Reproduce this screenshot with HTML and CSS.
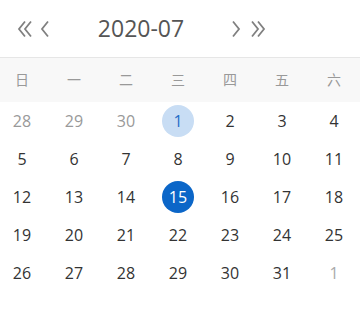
FILE: index.html
```html
<!DOCTYPE html>
<html lang="zh">
<head>
<meta charset="utf-8">
<link rel="stylesheet" href="styles.css">
</head>
<body>
<div class="cal">
  <div class="head">
    <span class="nav nav-dbl-l"><svg width="16" height="18" viewBox="0 0 16 18"><path d="M8 1.5 L2 9 L8 16.5 M14 1.5 L8 9 L14 16.5" fill="none" stroke="#808080" stroke-width="1.8"/></svg></span>
    <span class="nav nav-l"><svg width="10" height="18" viewBox="0 0 10 18"><path d="M8 1.5 L2 9 L8 16.5" fill="none" stroke="#808080" stroke-width="1.8"/></svg></span>
    <span class="title">2020-07</span>
    <span class="nav nav-r"><svg width="10" height="18" viewBox="0 0 10 18"><path d="M2 1.5 L8 9 L2 16.5" fill="none" stroke="#808080" stroke-width="1.8"/></svg></span>
    <span class="nav nav-dbl-r"><svg width="16" height="18" viewBox="0 0 16 18"><path d="M2 1.5 L8 9 L2 16.5 M8 1.5 L14 9 L8 16.5" fill="none" stroke="#808080" stroke-width="1.8"/></svg></span>
  </div>
  <div class="week">
    <span>日</span><span>一</span><span>二</span><span>三</span><span>四</span><span>五</span><span>六</span>
  </div>
  <div class="days">
    <span class="d other">28</span><span class="d other">29</span><span class="d other">30</span><span class="d"><b class="today">1</b></span><span class="d">2</span><span class="d">3</span><span class="d">4</span>
    <span class="d">5</span><span class="d">6</span><span class="d">7</span><span class="d">8</span><span class="d">9</span><span class="d">10</span><span class="d">11</span>
    <span class="d">12</span><span class="d">13</span><span class="d">14</span><span class="d"><b class="sel">15</b></span><span class="d">16</span><span class="d">17</span><span class="d">18</span>
    <span class="d">19</span><span class="d">20</span><span class="d">21</span><span class="d">22</span><span class="d">23</span><span class="d">24</span><span class="d">25</span>
    <span class="d">26</span><span class="d">27</span><span class="d">28</span><span class="d">29</span><span class="d">30</span><span class="d">31</span><span class="d other2">1</span>
  </div>
</div>
</body>
</html>
```

FILE: styles.css
```css
html, body {
  margin: 0;
  padding: 0;
  background: #fff;
}
body {
  font-family: "Open Sans", "Noto Sans CJK SC", sans-serif;
  overflow: hidden;
}
.cal {
  width: 360px;
}
.head {
  height: 57px;
  border-bottom: 1px solid #e6e6e6;
  display: flex;
  align-items: center;
  padding-left: 17px;
  box-sizing: content-box;
}
.nav {
  display: flex;
  align-items: center;
  height: 18px;
}
.nav svg { display: block; }
.nav-l { margin-left: 7px; }
.title {
  margin-left: 46px;
  width: 90px;
  text-align: center;
  font-size: 23px;
  color: #555;
  line-height: 1;
  font-family: "Open Sans", sans-serif;
}
.nav-r { margin-left: 45px; }
.nav-dbl-r { margin-left: 9px; }
.week {
  height: 44px;
  background: #f8f8f8;
  display: grid;
  grid-template-columns: repeat(7, 52px);
  margin: 0 -4px;
  align-items: center;
  justify-items: center;
  font-family: "Noto Sans CJK SC", sans-serif;
  font-size: 14px;
  color: #999;
}
.week span {
  position: relative;
  top: -1px;
}
.days {
  display: grid;
  grid-template-columns: repeat(7, 52px);
  grid-auto-rows: 38px;
  margin: 0 -4px;
}
.d {
  display: flex;
  align-items: center;
  justify-content: center;
  font-size: 16px;
  color: #333;
}
.d.other { color: #999; }
.d.other2 { color: #aaa; }
.d b {
  font-weight: normal;
  width: 32px;
  height: 32px;
  border-radius: 50%;
  display: flex;
  align-items: center;
  justify-content: center;
}
.today {
  background: #c8ddf4;
  color: #1e6fc8;
}
.sel {
  background: #0b66c8;
  color: #fff;
}
```
